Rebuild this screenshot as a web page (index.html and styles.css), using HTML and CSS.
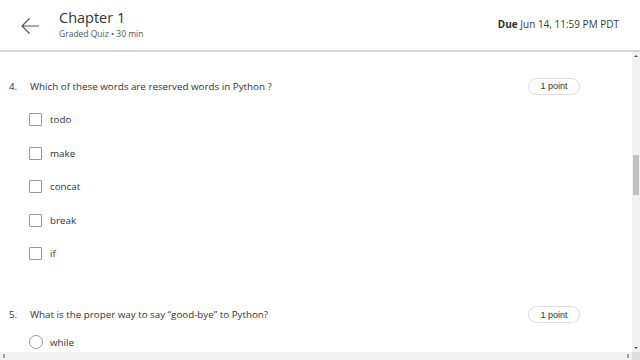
FILE: index.html
```html
<!DOCTYPE html>
<html>
<head>
<meta charset="utf-8">
<link rel="stylesheet" href="styles.css">
</head>
<body>
<div class="app">
  <header class="topbar">
    <div class="back">
      <svg width="20" height="18" viewBox="0 0 20 18"><path d="M19 9H2M9.5 1.5L2 9l7.5 7.5" fill="none" stroke="#555" stroke-width="1.2"/></svg>
    </div>
    <div class="titles">
      <div class="title">Chapter 1</div>
      <div class="subtitle">Graded Quiz • 30 min</div>
    </div>
    <div class="due"><b>Due</b> Jun 14, 11:59 PM PDT</div>
  </header>
  <div class="body">
    <main class="content">
      <section class="question">
        <div class="qhead">
          <span class="qnum">4.</span>
          <span class="qtext">Which of these words are reserved words in Python ?</span>
          <span class="pill">1 point</span>
        </div>
        <div class="options">
          <label class="opt"><span class="box"></span>todo</label>
          <label class="opt"><span class="box"></span>make</label>
          <label class="opt"><span class="box"></span>concat</label>
          <label class="opt"><span class="box"></span>break</label>
          <label class="opt"><span class="box"></span>if</label>
        </div>
      </section>
      <section class="question q5">
        <div class="qhead">
          <span class="qnum">5.</span>
          <span class="qtext">What is the proper way to say “good-bye” to Python?</span>
          <span class="pill">1 point</span>
        </div>
        <div class="options">
          <label class="opt"><span class="radio"></span>while</label>
        </div>
      </section>
    </main>
    <div class="vscroll">
      <span class="arrow up"></span>
      <span class="thumb"></span>
      <span class="arrow down"></span>
    </div>
    <div class="hscroll">
      <span class="harrow"></span>
      <span class="harrow"></span>
    </div>
    <div class="corner"></div>
  </div>
</div>
</body>
</html>
```
FILE: styles.css
```css
* { box-sizing: border-box; }
html, body { margin: 0; padding: 0; }
body {
  width: 640px;
  height: 360px;
  overflow: hidden;
  background: #fff;
  font-family: "Open Sans", "Liberation Sans", sans-serif;
  color: #3a3a3a;
}
.app {
  display: flex;
  flex-direction: column;
  height: 360px;
}
.topbar {
  height: 52px;
  flex: none;
  display: flex;
  align-items: center;
  border-bottom: 2px solid #d6d6d6;
  padding: 0 21px 0 20px;
}
.back {
  width: 39px;
  display: flex;
  align-items: center;
  padding-top: 2px;
}
.titles { flex: 1; display: flex; flex-direction: column; margin-top: -3px; }
.title { font-size: 14.5px; line-height: 20px; color: #333; }
.subtitle { font-size: 8.5px; line-height: 12px; color: #555; }
.due { font-size: 10px; color: #3a3a3a; margin-top: -2px; }
.due b { font-weight: 700; color: #333; }
.body {
  flex: 1;
  display: grid;
  grid-template-columns: 1fr 8px;
  grid-template-rows: 1fr 8px;
  min-height: 0;
}
.content {
  overflow: hidden;
  padding: 25px 52px 0 9px;
}
.qhead {
  display: flex;
  align-items: center;
  height: 18px;
  font-size: 9.8px;
  color: #333;
}
.qnum { width: 21px; }
.qtext { flex: 1; }
.pill {
  width: 52px;
  height: 17px;
  border: 1px solid #ddd;
  border-radius: 9px;
  display: flex;
  align-items: center;
  justify-content: center;
  font-family: "Liberation Sans", Arial, sans-serif;
  font-size: 9px;
  color: #333;
}
.options {
  display: flex;
  flex-direction: column;
  gap: 20px;
  padding: 18px 0 0 20px;
}
.opt {
  display: flex;
  align-items: center;
  height: 13.5px;
  font-size: 9.8px;
  color: #333;
}
.box {
  width: 13px;
  height: 13px;
  border: 1px solid #999;
  border-radius: 1px;
  margin-right: 8px;
}
.radio {
  width: 14px;
  height: 14px;
  border: 1px solid #999;
  border-radius: 50%;
  margin-right: 7px;
}
.q5 { margin-top: 45px; }
.q5 .options { padding-top: 12px; }
.vscroll {
  background: #f1f1f1;
  display: flex;
  flex-direction: column;
  align-items: center;
}
.thumb {
  width: 6px;
  height: 40px;
  background: #c1c1c1;
  margin-top: 98px;
}
.arrow { width: 0; height: 0; border-left: 2px solid transparent; border-right: 2px solid transparent; }
.arrow.up { border-bottom: 2px solid #505050; margin-top: 3px; }
.arrow.down { border-top: 2px solid #505050; margin-top: auto; margin-bottom: 3px; }
.hscroll {
  background: #f1f1f1;
  display: flex;
  justify-content: space-between;
  align-items: center;
  padding: 0 3px;
}
.harrow { width: 2px; height: 4px; background: #a3a3a3; }
.corner { background: #dcdcdc; }
```
